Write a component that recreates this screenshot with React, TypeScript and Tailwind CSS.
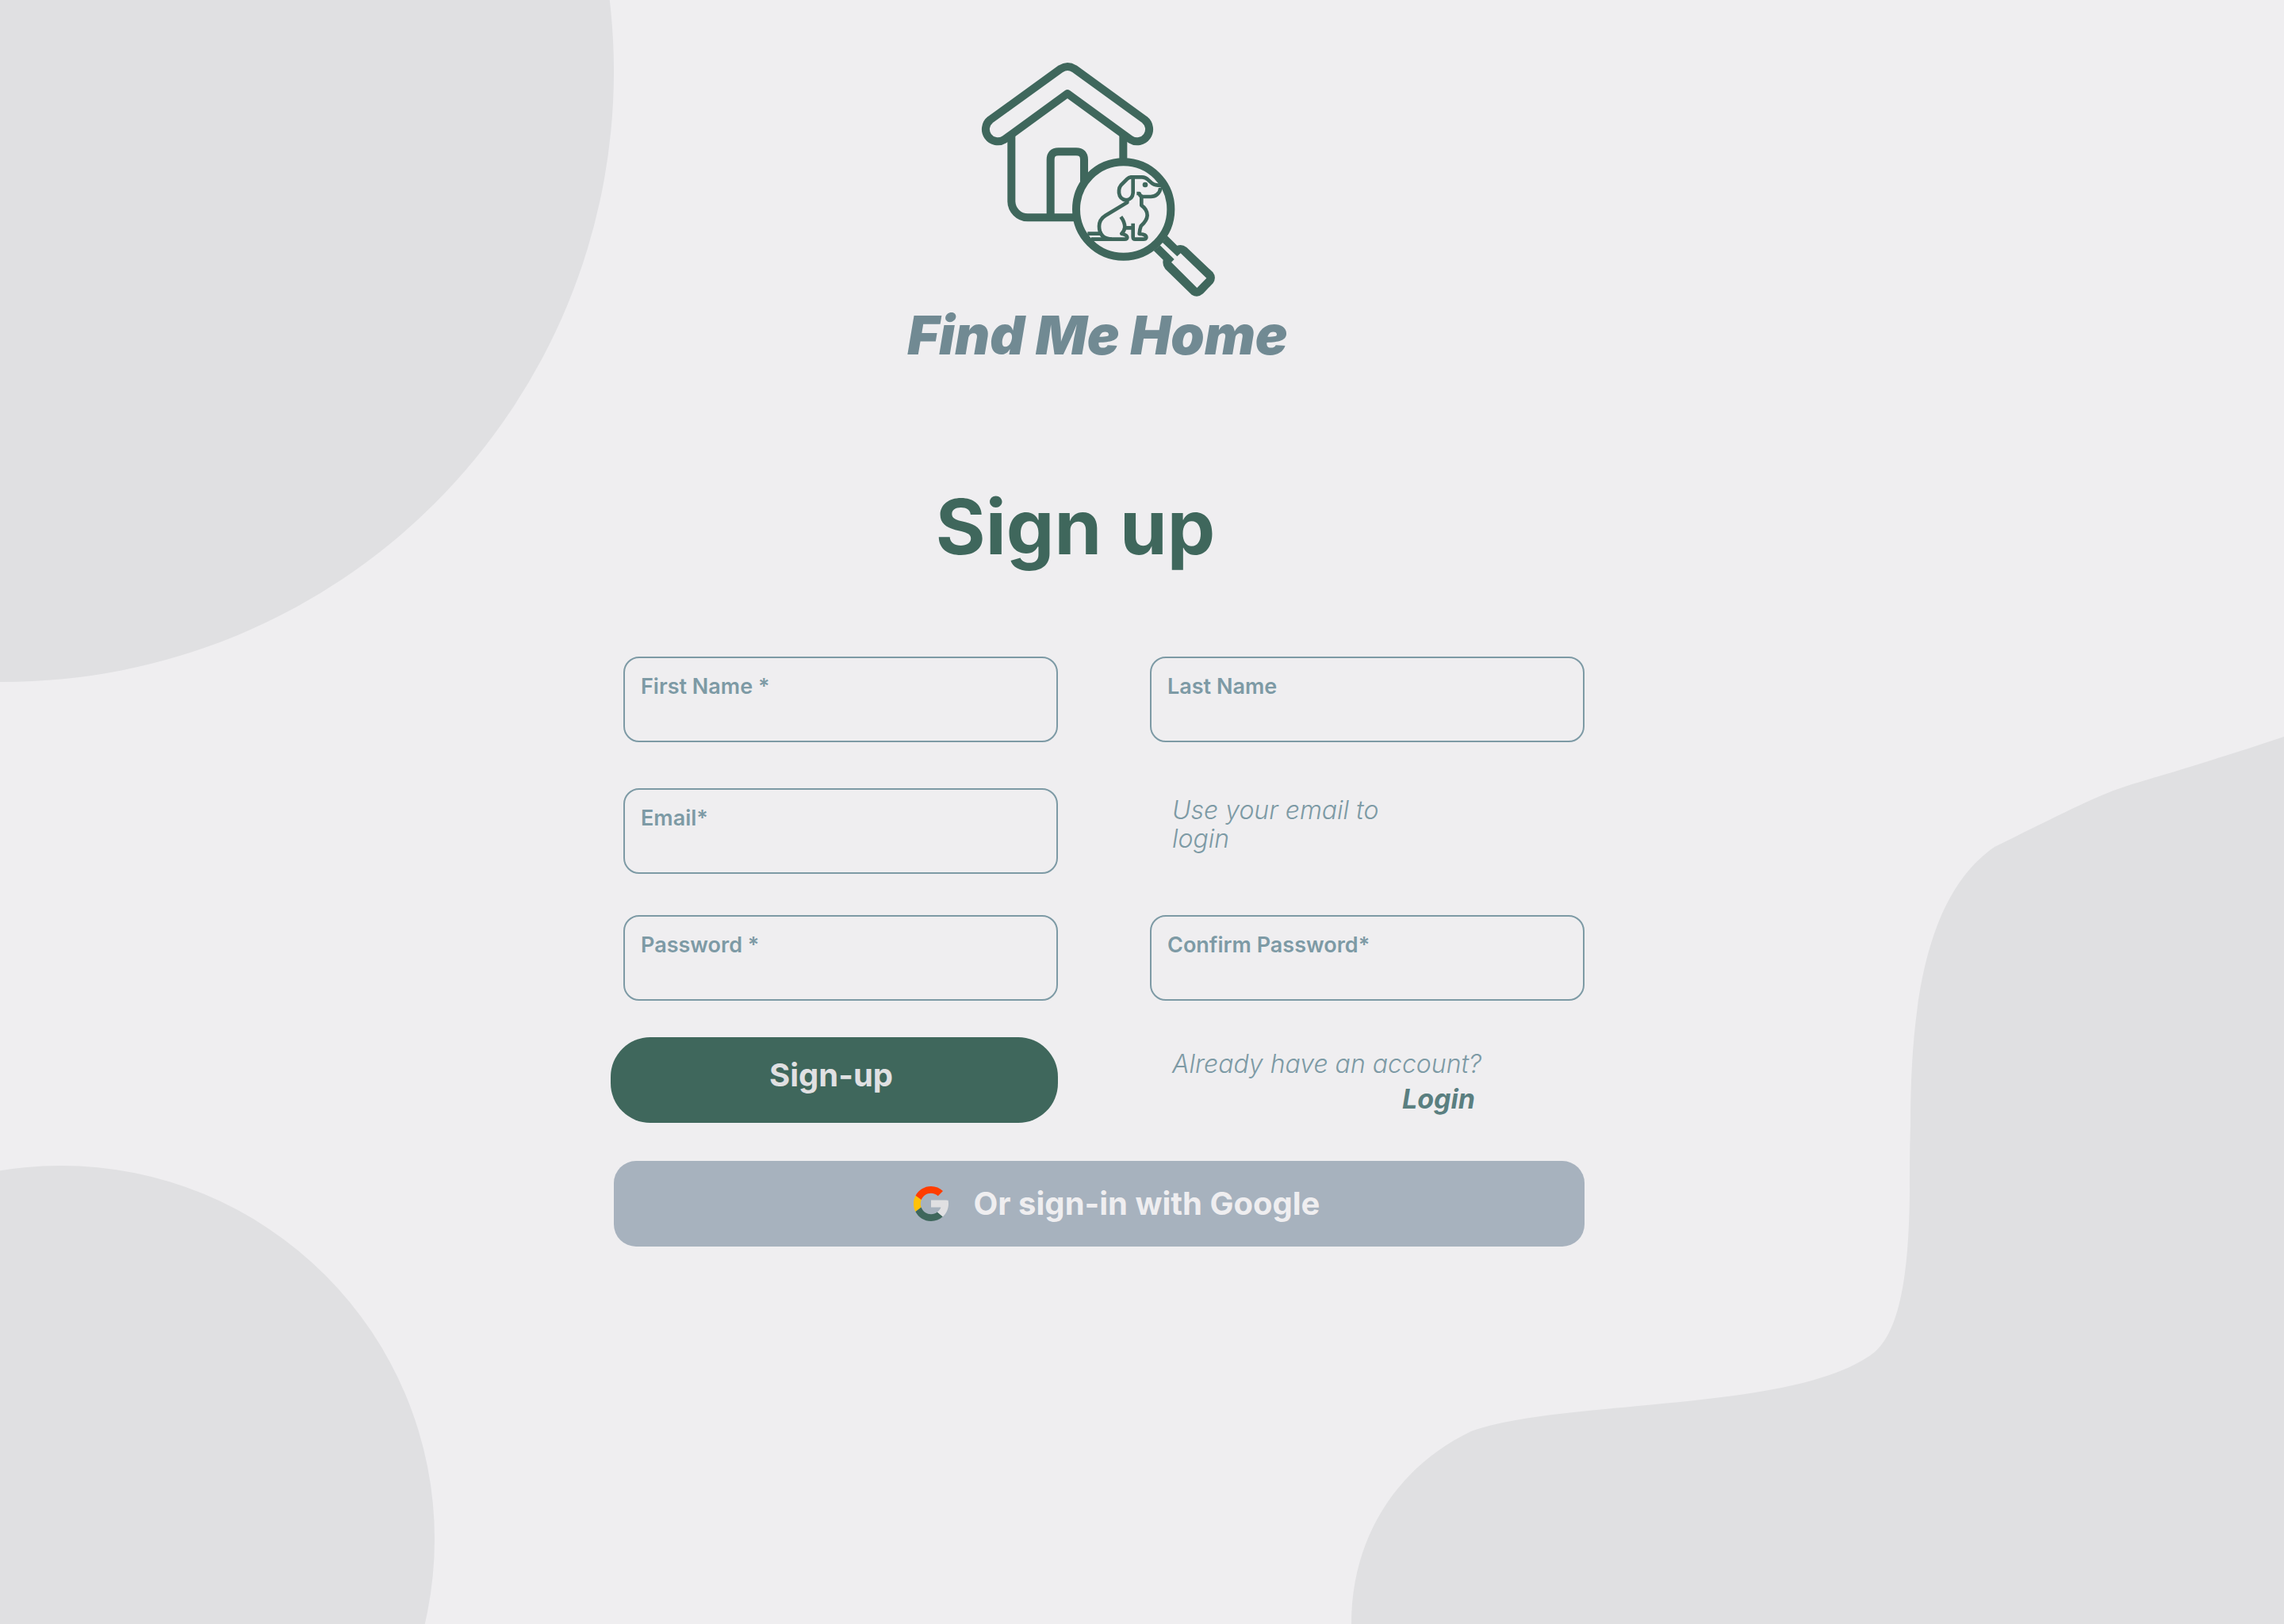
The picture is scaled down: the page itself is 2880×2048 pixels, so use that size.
function Backdrop() {
  return (
    <svg
      className="absolute inset-0 h-full w-full"
      viewBox="0 0 2880 2048"
      preserveAspectRatio="none"
      fill="#e0e0e2"
      aria-hidden="true"
    >
      <circle cx="4" cy="90" r="770" />
      <circle cx="77" cy="1941" r="471" />
      <path d="M2880 929C2830 946 2780 961 2739 974C2705 984 2683 990 2660 999C2625 1013 2580 1036 2515 1068C2425 1130 2409 1280 2409 1420C2408 1450 2408 1475 2408 1503C2407 1610 2395 1690 2354 1712C2250 1780 1965 1765 1855 1805C1765 1848 1704 1935 1704 2048H2880Z" />
    </svg>
  );
}

function Logo() {
  return (
    <svg className="size-[296px]" viewBox="50 54 888 888" fill="none" stroke="#3f675c" role="img" aria-label="House with a dog under a magnifying glass">
      <g strokeWidth="30" strokeLinejoin="round">
        <path d="M355 80L88 273A46 46 0 0 0 141 348L380 174L619 348A46 46 0 0 0 672 273L406 80Q380 64 355 80Z" />
        <path d="M168 325V580A62 63 0 0 0 230 643H408" />
        <path d="M591 325V425" />
        <path d="M316 643V424Q316 394 346 394H413Q443 394 443 424V510" />
        <circle cx="592" cy="612" r="179" />
      </g>
      <path
        fill="#3f675c"
        stroke="none"
        fillRule="evenodd"
        d="M757 712L795 749Q814 742 831 756L930 850Q945 870 931 891L893 931Q872 949 850 935L750 838Q738 824 742 803L706 768Q738 745 757 712ZM740 738L730 748L784 801L773 812L870 909L906 872L808 778L795 790Z"
      />
      <g strokeWidth="14" strokeLinejoin="round">
        <path d="M628 490H620Q612 491 606 497L582 521Q575 529 575 540V550Q578 575 602 577Q626 574 628 550Z" />
        <path d="M628 490H662Q675 490 685 500L697 511Q706 520 722 521H738" />
        <path d="M731 530Q733 543 719 556Q710 564 695 564H660V597Q682 612 682 635Q681 655 658 675Q653 688 652 705Q679 706 678 719Q676 725 668 725H636Q628 725 628 716V665" />
        <path d="M642 552H652Q654 562 664 564" />
        <path d="M582 640Q597 660 597 680Q595 695 585 704Q606 709 606 718Q606 725 596 725H545Q500 722 500 676Q500 650 524 635L606 586V575" />
        <path d="M598 682H628M512 704H456M548 725H470" />
      </g>
      <circle cx="674" cy="519" r="10" fill="#3f675c" stroke="none" />
    </svg>
  );
}

function GoogleMark() {
  return (
    <svg className="size-11" viewBox="4 4 40 40" aria-hidden="true">
      <path fill="#ffc107" d="M12.717 28.054A12 12 0 0 1 12.877 19.51L6.306 14.691A20 20 0 0 0 6.195 33.079Z" />
      <path fill="#ff3d00" d="M6.306 14.691l6.571 4.819C14.655 15.108 18.961 12 24 12c3.059 0 5.842 1.154 7.961 3.039l5.657-5.657C34.046 6.053 29.268 4 24 4 16.318 4 9.656 8.337 6.306 14.691z" />
      <path fill="#3f675c" d="M24 44c5.166 0 9.86-1.977 13.409-5.192l-6.19-5.238C29.211 35.091 26.715 36 24 36c-5.202 0-9.619-3.317-11.283-7.946l-6.522 5.025C9.505 39.556 16.227 44 24 44z" />
      <path fill="#e0e0e2" d="M43.611 20.083H42V20H24v8h11.303c-.792 2.237-2.231 4.166-4.087 5.571l6.19 5.238C36.971 39.205 44 34 44 24c0-1.341-.138-2.65-.389-3.917z" />
    </svg>
  );
}

type FieldProps = { id: string; label: string; type?: string; className?: string };

function Field({ id, label, type = "text", className = "" }: FieldProps) {
  return (
    <div className={`flex h-27 flex-col rounded-[20px] border-2 border-[#7d9aa5] px-5 pt-5 ${className}`}>
      <label htmlFor={id} className="text-[27px] leading-8 font-semibold whitespace-nowrap text-[#7d9aa5]">
        {label}
      </label>
      <input id={id} name={id} type={type} className="min-h-0 w-full flex-1 bg-transparent text-2xl text-[#3f675c] outline-none" />
    </div>
  );
}

export default function App() {
  return (
    <div className="relative min-h-screen bg-[#efeef0] font-['Inter',sans-serif]">
      <Backdrop />
      <div className="relative pt-[78px] pb-16 pr-28">
        <main className="mx-auto flex max-w-[1228px] flex-col">
          <header className="flex flex-col items-center">
            <Logo />
            <p className="mt-2.5 text-[68px] leading-[76px] font-black whitespace-nowrap text-[#718a93] italic">Find Me Home</p>
          </header>
          <h1 className="mt-[148px] pr-14 text-center text-[96px] leading-[112px] font-bold text-[#3f675c]">Sign up</h1>

          <form className="mt-[108px]" onSubmit={(e) => e.preventDefault()}>
            <div className="grid grid-cols-[564fr_548fr] gap-x-[116px]">
              <Field id="firstName" label="First Name *" className="ml-4" />
              <Field id="lastName" label="Last Name" />
            </div>
            <div className="mt-[58px] grid grid-cols-[564fr_548fr] gap-x-[116px]">
              <Field id="email" label="Email*" type="email" className="ml-4" />
              <p className="w-80 pt-2.5 pl-7 text-[32px] leading-9 font-light text-[#7d9aa5] italic">Use your email to login</p>
            </div>
            <div className="mt-[52px] grid grid-cols-[564fr_548fr] gap-x-[116px]">
              <Field id="password" label="Password *" type="password" className="ml-4" />
              <Field id="confirmPassword" label="Confirm Password*" type="password" />
            </div>
            <div className="mt-[46px] grid grid-cols-[564fr_548fr] gap-x-[116px]">
              <button type="submit" className="flex h-27 items-center justify-center rounded-[50px] bg-[#3f675c] pr-2 pb-3 text-[40px] font-bold text-[#e0e0e2]">
                Sign-up
              </button>
              <div className="flex w-[410px] flex-col pt-4 pl-7 whitespace-nowrap">
                <p className="text-[32px] leading-9 font-light text-[#7d9aa5] italic">Already have an account?</p>
                <a href="#login" className="mt-2 self-end text-[34px] leading-9 font-bold text-[#5a7f80] italic">
                  Login
                </a>
              </div>
            </div>
            <div className="mt-12 flex pl-1">
              <button type="button" className="flex h-27 flex-1 items-center justify-center gap-8 rounded-[28px] bg-[#a7b2be] pl-11 text-[40px] font-bold text-[#efeef0]">
                <GoogleMark />
                Or sign-in with Google
              </button>
            </div>
          </form>
        </main>
      </div>
    </div>
  );
}
